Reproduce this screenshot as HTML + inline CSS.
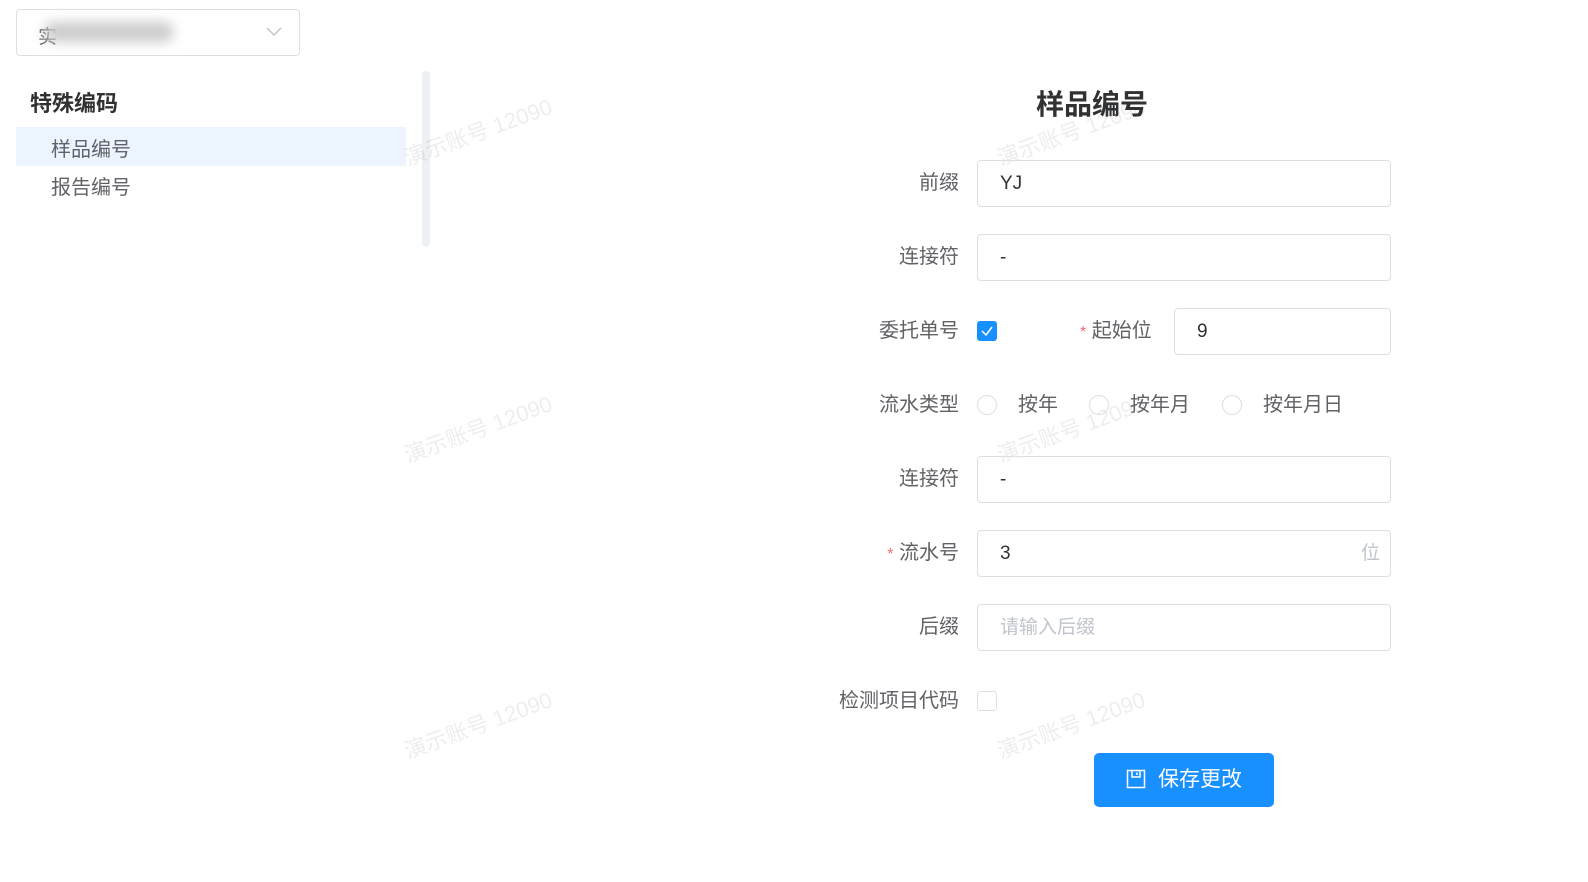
<!DOCTYPE html>
<html><head><meta charset="utf-8"><style>
*{box-sizing:border-box;margin:0;padding:0}
body{width:1588px;height:882px;background:#fff;font-family:"Liberation Sans","Noto Sans CJK SC",sans-serif;color:#606266;position:relative;overflow:hidden}
.abs{position:absolute}
.sel{left:16px;top:9px;width:284px;height:47px;border:1px solid #dcdfe6;border-radius:4px}
.blur{left:44px;top:22px;width:130px;height:20px;background:#ccc;filter:blur(6px);border-radius:10px}
.side{left:16px;top:70px;width:400px;height:178px;box-shadow:0 0 4px rgba(0,0,0,.02)}
.scroll{left:422px;top:71px;width:8px;height:176px;background:#edf0f4;border-radius:4px}
.lab{font-size:20px;text-align:right;width:200px;left:759px;line-height:24px}
.inp{left:977px;width:414px;height:47px;border:1px solid #dcdfe6;border-radius:4px;font-size:19px;color:#303133;padding-left:22px;line-height:45px}
.wm{color:rgba(0,0,0,.07);font-size:22px;transform:rotate(-20deg);white-space:nowrap}
.radio{width:20px;height:20px;border:1px solid #dcdfe6;border-radius:50%}
.req{color:#f56c6c;font-size:16px}
</style></head><body>
<div class="abs sel"></div>
<div class="abs" style="left:38px;top:22px;font-size:19px;color:#606266">实</div>
<div class="abs blur"></div>
<svg class="abs" style="left:265px;top:26px" width="18" height="12"><path d="M2 2 L9 9 L16 2" fill="none" stroke="#c0c4cc" stroke-width="1.5"/></svg>
<div class="abs side"></div>
<div class="abs scroll"></div>
<div class="abs" style="left:30px;top:86px;font-size:22px;font-weight:bold;color:#303133">特殊编码</div>
<div class="abs" style="left:16px;top:127px;width:390px;height:39px;background:#ecf5ff"></div>
<div class="abs" style="left:51px;top:133px;font-size:20px">样品编号</div>
<div class="abs" style="left:51px;top:171px;font-size:20px">报告编号</div>

<div class="abs wm" style="left:400px;top:115px">演示账号 12090</div>
<div class="abs wm" style="left:400px;top:412px">演示账号 12090</div>
<div class="abs wm" style="left:400px;top:708px">演示账号 12090</div>
<div class="abs wm" style="left:993px;top:115px">演示账号 12090</div>
<div class="abs wm" style="left:993px;top:412px">演示账号 12090</div>
<div class="abs wm" style="left:993px;top:708px">演示账号 12090</div>

<div class="abs" style="left:1036px;top:83px;font-size:28px;font-weight:bold;color:#303133">样品编号</div>

<div class="abs lab" style="top:171px">前缀</div>
<div class="abs inp" style="top:160px">YJ</div>
<div class="abs lab" style="top:245px">连接符</div>
<div class="abs inp" style="top:234px">-</div>
<div class="abs lab" style="top:319px">委托单号</div>
<div class="abs" style="left:977px;top:321px;width:20px;height:20px;background:#1890ff;border-radius:3px"><svg width="20" height="20"><path d="M5 10 L9 14 L15 6" fill="none" stroke="#fff" stroke-width="1.5"/></svg></div>
<div class="abs" style="left:1080px;top:319px;font-size:20px;line-height:24px"><span class="req">*</span> 起始位</div>
<div class="abs inp" style="top:308px;left:1174px;width:217px">9</div>
<div class="abs lab" style="top:393px">流水类型</div>
<div class="abs radio" style="left:977px;top:395px"></div>
<div class="abs" style="left:1018px;top:393px;font-size:20px;line-height:24px">按年</div>
<div class="abs radio" style="left:1089px;top:395px"></div>
<div class="abs" style="left:1130px;top:393px;font-size:20px;line-height:24px">按年月</div>
<div class="abs radio" style="left:1222px;top:395px"></div>
<div class="abs" style="left:1263px;top:393px;font-size:20px;line-height:24px">按年月日</div>
<div class="abs lab" style="top:467px">连接符</div>
<div class="abs inp" style="top:456px">-</div>
<div class="abs lab" style="top:541px"><span class="req">*</span> 流水号</div>
<div class="abs inp" style="top:530px">3<span style="position:absolute;right:10px;color:#c0c4cc">位</span></div>
<div class="abs lab" style="top:615px">后缀</div>
<div class="abs inp" style="top:604px;color:#c0c4cc">请输入后缀</div>
<div class="abs lab" style="top:689px">检测项目代码</div>
<div class="abs" style="left:977px;top:691px;width:20px;height:20px;border:1px solid #dcdfe6;border-radius:3px"></div>
<div class="abs" style="left:1094px;top:753px;width:180px;height:54px;background:#1890ff;border-radius:5px;color:#fff;font-size:21px;line-height:54px;padding-left:64px">保存更改</div>
<svg class="abs" style="left:1126px;top:769px" width="20" height="20"><path d="M1.5 1.5 H18.5 V18.5 H1.5 Z M6 1.5 V8 H14 V1.5 M11 3.5 V6" fill="none" stroke="#fff" stroke-width="1.5"/></svg>
</body></html>
